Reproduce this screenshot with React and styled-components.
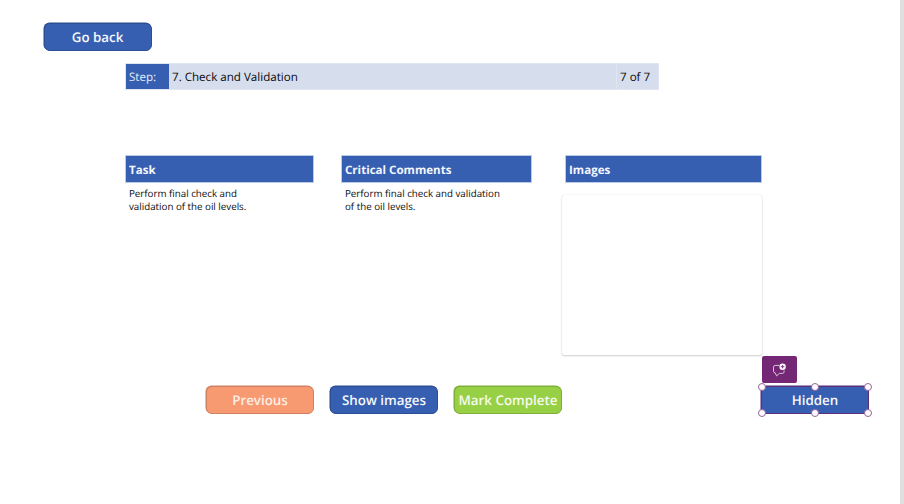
import React from "react";
import styled, { createGlobalStyle } from "styled-components";

const GlobalStyle = createGlobalStyle`
  * { box-sizing: border-box; }
  html, body { margin: 0; padding: 0; overflow: hidden; }
  body {
    font-family: "Open Sans", "Noto Sans", sans-serif;
    text-rendering: geometricPrecision;
    background: #fff;
  }
`;

const Screen = styled.main`
  width: 904px;
  height: 504px;
  display: flex;
  flex-direction: column;
  background: #fff;
  border-right: 4px solid #dfdfdf;
`;

const TopBar = styled.header`
  height: 63px;
  padding: 23px 0 0 44px;
`;

const Button = styled.button`
  position: relative;
  flex: none;
  display: flex;
  align-items: center;
  justify-content: center;
  width: 108px;
  height: 28px;
  padding: 0 1px 0 0;
  margin: 0 0 0 ${(p) => p.$gap || 0}px;
  border: 1px solid ${(p) => p.$edge || "#2c4e93"};
  border-radius: ${(p) => (p.$square ? 0 : 6)}px;
  box-shadow: -0.5px -0.5px 0 0 ${(p) => p.$edge || "#2c4e93"};
  background: ${(p) => p.$fill || "#375fb1"};
  color: ${(p) => p.$ink || "#f6f8fc"};
  font: 600 13.33px/20px "Open Sans", "Noto Sans", sans-serif;
  text-rendering: geometricPrecision;
  white-space: nowrap;
`;

const StepBar = styled.section`
  display: flex;
  width: 534px;
  height: 27px;
  margin-left: 125px;
  font-size: 11.6px;
  background: #d6deed;
  border: 1px solid #dfe6f2;
  line-height: 27px;
`;

const StepLabel = styled.div`
  width: 43px;
  padding-left: 3px;
  color: #e8edf7;
  background: #375fb1;
`;

const StepName = styled.div`
  width: 448px;
  padding-left: 3px;
  color: #08090c;
  border-right: 1px solid #dfe6f2;
`;

const StepCount = styled.div`
  padding-left: 3px;
  color: #08090c;
`;

const Columns = styled.section`
  display: flex;
  height: 231px;
  margin: 65px 0 0 125px;
`;

const Column = styled.article`
  flex: none;
  width: ${(p) => p.$width}px;
  margin-right: ${(p) => p.$gap || 0}px;
`;

const ColumnTitle = styled.h2`
  height: 28px;
  margin: 0;
  padding: 1px 0 0 3px;
  border: 1px solid #bccbe6;
  background: #375fb1;
  color: #f3f6fb;
  font-size: 11.55px;
  font-weight: 700;
  line-height: 28px;
`;

const ColumnText = styled.p`
  margin: 4px 0 0;
  padding-left: 4px;
  color: #0c0c0c;
  font-size: 9.75px;
  line-height: 13.4px;
  white-space: pre-line;
`;

const ImageFrame = styled.div`
  width: 200px;
  height: 160px;
  margin: 12px 0 0 -3px;
  border-radius: 2px;
  background: #fff;
  box-shadow: 0 0 1px rgba(0, 0, 0, 0.22), 0 1px 2px rgba(0, 0, 0, 0.18);
`;

const Actions = styled.footer`
  display: flex;
  padding-left: 206px;

  ${Button} {
    padding: 0 0 1px;
  }
`;

const CommentBadge = styled.div`
  position: absolute;
  left: 0;
  top: -31px;
  width: 35px;
  height: 27px;
  display: flex;
  align-items: center;
  justify-content: center;
  border-radius: 2px;
  background: #742774;
`;

const Handle = styled.span`
  position: absolute;
  left: ${(p) => p.$x};
  top: ${(p) => p.$y};
  width: 8px;
  height: 8px;
  transform: translate(-50%, -50%);
  border: 1px solid #9a629a;
  border-radius: 50%;
  background: #fff;
`;

const HANDLES = ["0%", "100%"].flatMap((y) => ["0%", "50%", "100%"].map((x) => [x, y]));

function CommentIcon() {
  return (
    <svg width="15" height="14" viewBox="0 0 15 14" fill="none">
      <path
        d="M7.3 2.4H3.2Q1.5 2.4 1.5 4.1V8.2Q1.5 9.9 3.2 9.9L4.6 12.9L7.4 10.4H10.4Q12.1 10.4 12.1 8.7V7.4"
        stroke="#d9c3d9"
        strokeWidth="1"
        strokeLinejoin="round"
      />
      <circle cx="10.6" cy="3.7" r="3.2" fill="#fff" />
      <path d="M10.6 2V5.4M8.9 3.7H12.3" stroke="#742774" strokeWidth="0.9" />
    </svg>
  );
}

export default function App() {
  return (
    <>
      <GlobalStyle />
      <Screen>
        <TopBar>
          <Button>Go back</Button>
        </TopBar>
        <StepBar>
          <StepLabel>Step:</StepLabel>
          <StepName>7. Check and Validation</StepName>
          <StepCount>7 of 7</StepCount>
        </StepBar>
        <Columns>
          <Column $width={189} $gap={27}>
            <ColumnTitle>Task</ColumnTitle>
            <ColumnText>{"Perform final check and\nvalidation of the oil levels."}</ColumnText>
          </Column>
          <Column $width={191} $gap={33}>
            <ColumnTitle>Critical Comments</ColumnTitle>
            <ColumnText>{"Perform final check and validation\nof the oil levels."}</ColumnText>
          </Column>
          <Column $width={197}>
            <ColumnTitle>Images</ColumnTitle>
            <ImageFrame />
          </Column>
        </Columns>
        <Actions>
          <Button $fill="#f79a72" $edge="#cf8261" $ink="#fdeee7">Previous</Button>
          <Button $gap={16}>Show images</Button>
          <Button $gap={16} $fill="#98d045" $edge="#7fae39" $ink="#f6fbed">Mark Complete</Button>
          <Button $gap={199} $square $edge="#5a2f7c">
            Hidden
            <CommentBadge>
              <CommentIcon />
            </CommentBadge>
            {HANDLES.map(([x, y]) => (
              <Handle key={x + y} $x={x} $y={y} />
            ))}
          </Button>
        </Actions>
      </Screen>
    </>
  );
}
